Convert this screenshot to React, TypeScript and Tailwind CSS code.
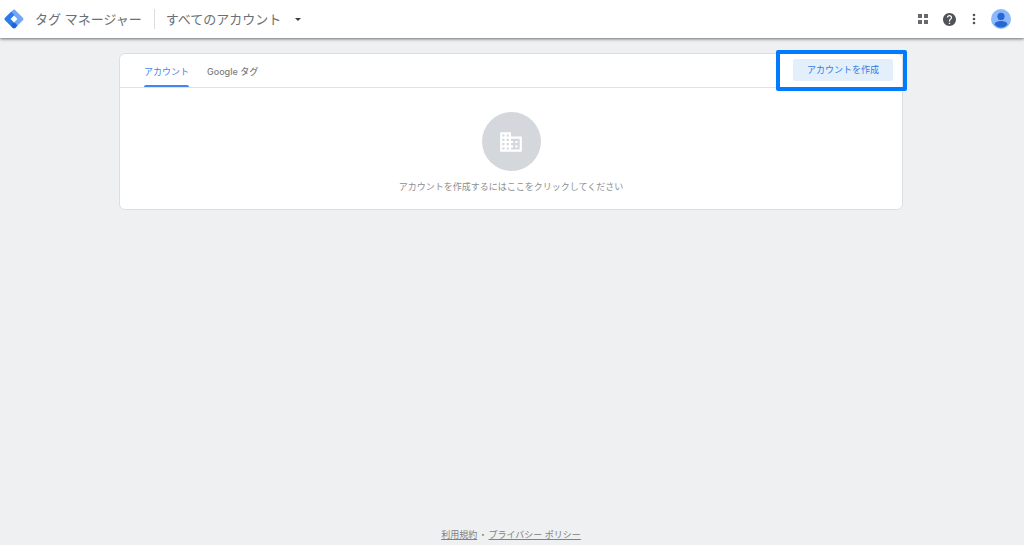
import React from 'react';

function TagManagerLogo() {
  return (
    <svg viewBox="0 0 20 20" className="size-5 shrink-0" aria-hidden="true">
      <path d="M8.700 1.200a1.800 1.800 0 0 1 2.600 0l7.500 7.500a1.800 1.800 0 0 1 0 2.600l-7.500 7.500a1.800 1.800 0 0 1-2.600 0L1.200 11.300a1.800 1.800 0 0 1 0-2.600z" fill="#72a6f7" />
      <path d="M7.200 2.700 1.200 8.700a1.800 1.800 0 0 0 0 2.600l7.500 7.500a1.800 1.800 0 0 0 2.600 0l2.200-2.200L6.800 10l3.800-3.800z" fill="#2b7bee" />
      <circle cx="10" cy="16.600" r="2.500" fill="#1967d2" />
      <path d="M10 6.600 13.400 10 10 13.400 6.600 10z" fill="#fff" />
    </svg>
  );
}

function Header() {
  return (
    <header className="relative flex h-[38px] items-center bg-white pr-[13px] pl-1 text-[#6b6f73] shadow-[0_1px_3px_rgba(60,64,67,0.75)]">
      <TagManagerLogo />
      <h1 className="ml-[11px] text-[13px] leading-5 whitespace-nowrap">タグ マネージャー</h1>
      <span className="ml-3 h-5 w-px bg-[#dadce0]" />
      <button type="button" className="ml-[11px] flex items-center gap-[14px] text-[13px] leading-5 whitespace-nowrap">
        すべてのアカウント
        <svg viewBox="0 0 6 3" className="h-[3px] w-1.5" aria-hidden="true">
          <path d="M0 0h6L3 3z" fill="#3c4043" />
        </svg>
      </button>
      <div className="ml-auto flex items-center">
        <button type="button" aria-label="アプリ" className="mr-[14px]">
          <svg viewBox="0 0 12 12" className="size-3" fill="#68696c">
            <path d="M1 1h4v4H1zM7 1h4v4H7zM1 7h4v4H1zM7 7h4v4H7z" />
          </svg>
        </button>
        <button type="button" aria-label="ヘルプ" className="mr-[9px]">
          <svg viewBox="2 2 20 20" className="size-[13px]" fill="#505357">
            <path d="M12 2C6.48 2 2 6.48 2 12s4.48 10 10 10 10-4.48 10-10S17.52 2 12 2zm1 17h-2v-2h2v2zm2.07-7.75-.9.92C13.45 12.9 13 13.5 13 15h-2v-.5c0-1.1.45-2.1 1.17-2.83l1.24-1.26c.37-.36.59-.86.59-1.41 0-1.1-.9-2-2-2s-2 .9-2 2H8c0-2.21 1.79-4 4-4s4 1.79 4 4c0 .88-.36 1.68-.93 2.25z" />
          </svg>
        </button>
        <button type="button" aria-label="その他" className="mr-2">
          <svg viewBox="0 0 18 18" className="size-[18px]" fill="#505357">
            <circle cx="9" cy="5" r="1.3" />
            <circle cx="9" cy="9" r="1.3" />
            <circle cx="9" cy="13" r="1.3" />
          </svg>
        </button>
        <button type="button" aria-label="プロフィール">
          <svg viewBox="0 0 20 20" className="size-5">
            <circle cx="10" cy="10" r="10" fill="#8ab8fb" />
            <circle cx="10" cy="7.4" r="3.6" fill="#2667d4" />
            <path d="M3.700 15.200c0-2 3.500-3.100 6.300-3.100s6.300 1.100 6.300 3.100C15 17.400 12.700 18.600 10 18.600S5 17.400 3.700 15.200z" fill="#2667d4" />
          </svg>
        </button>
      </div>
    </header>
  );
}

function AccountsCard() {
  return (
    <section className="relative mx-auto w-full max-w-[784px] rounded-md border border-[#dadfe4] bg-white">
      <div className="flex h-[34px] items-stretch border-b border-[#e0e3e6] pr-[9px] pl-6">
        <nav className="flex gap-[18px] text-[9px] leading-3">
          <a href="#accounts" className="relative flex items-center pt-[3px] text-[#4285f4]">
            アカウント
            <span className="absolute inset-x-0 bottom-0 h-0.5 rounded-t bg-[#4285f4]" />
          </a>
          <a href="#google-tags" className="flex items-center pt-[3px] font-medium text-[#808080]">
            Google タグ
          </a>
        </nav>
        <button
          type="button"
          className="mt-[5px] ml-auto h-[22px] w-[100px] rounded-xs bg-[#e4effc] text-[9px] leading-3 text-[#2f7de1]"
        >
          アカウントを作成
        </button>
      </div>
      <div className="flex flex-col items-center pt-6 pb-4">
        <div className="flex size-[59px] items-center justify-center rounded-full bg-[#d4d7dc]">
          <svg viewBox="0 0 24 24" className="size-[26px]" fill="#fff" aria-hidden="true">
            <path d="M12 7V3H2v18h20V7H12zM6 19H4v-2h2v2zm0-4H4v-2h2v2zm0-4H4V9h2v2zm0-4H4V5h2v2zm4 12H8v-2h2v2zm0-4H8v-2h2v2zm0-4H8V9h2v2zm0-4H8V5h2v2zm10 12h-8v-2h2v-2h-2v-2h2v-2h-2V9h8v10zm-2-8h-2v2h2v-2zm0 4h-2v2h2v-2z" />
          </svg>
        </div>
        <p className="mt-[10px] text-[9px] leading-3 text-[#8c8f92]">
          アカウントを作成するにはここをクリックしてください
        </p>
      </div>
      <div className="pointer-events-none absolute -top-1 -right-[5px] h-[41px] w-[131px] rounded-xs border-4 border-[#007bff]" />
    </section>
  );
}

export default function App() {
  return (
    <div className="flex min-h-screen flex-col bg-[#eef0f2] font-['Inter','Noto_Sans_CJK_JP',sans-serif]">
      <Header />
      <main className="flex-1 pt-[15px] pr-[18px] pl-4">
        <AccountsCard />
      </main>
      <footer className="flex justify-center gap-1 pr-0.5 pb-1 text-[9px] leading-3 text-[#808080]">
        <a href="#terms" className="underline">利用規約</a>
        <span className="font-black">·</span>
        <a href="#privacy" className="underline">プライバシー ポリシー</a>
      </footer>
    </div>
  );
}
